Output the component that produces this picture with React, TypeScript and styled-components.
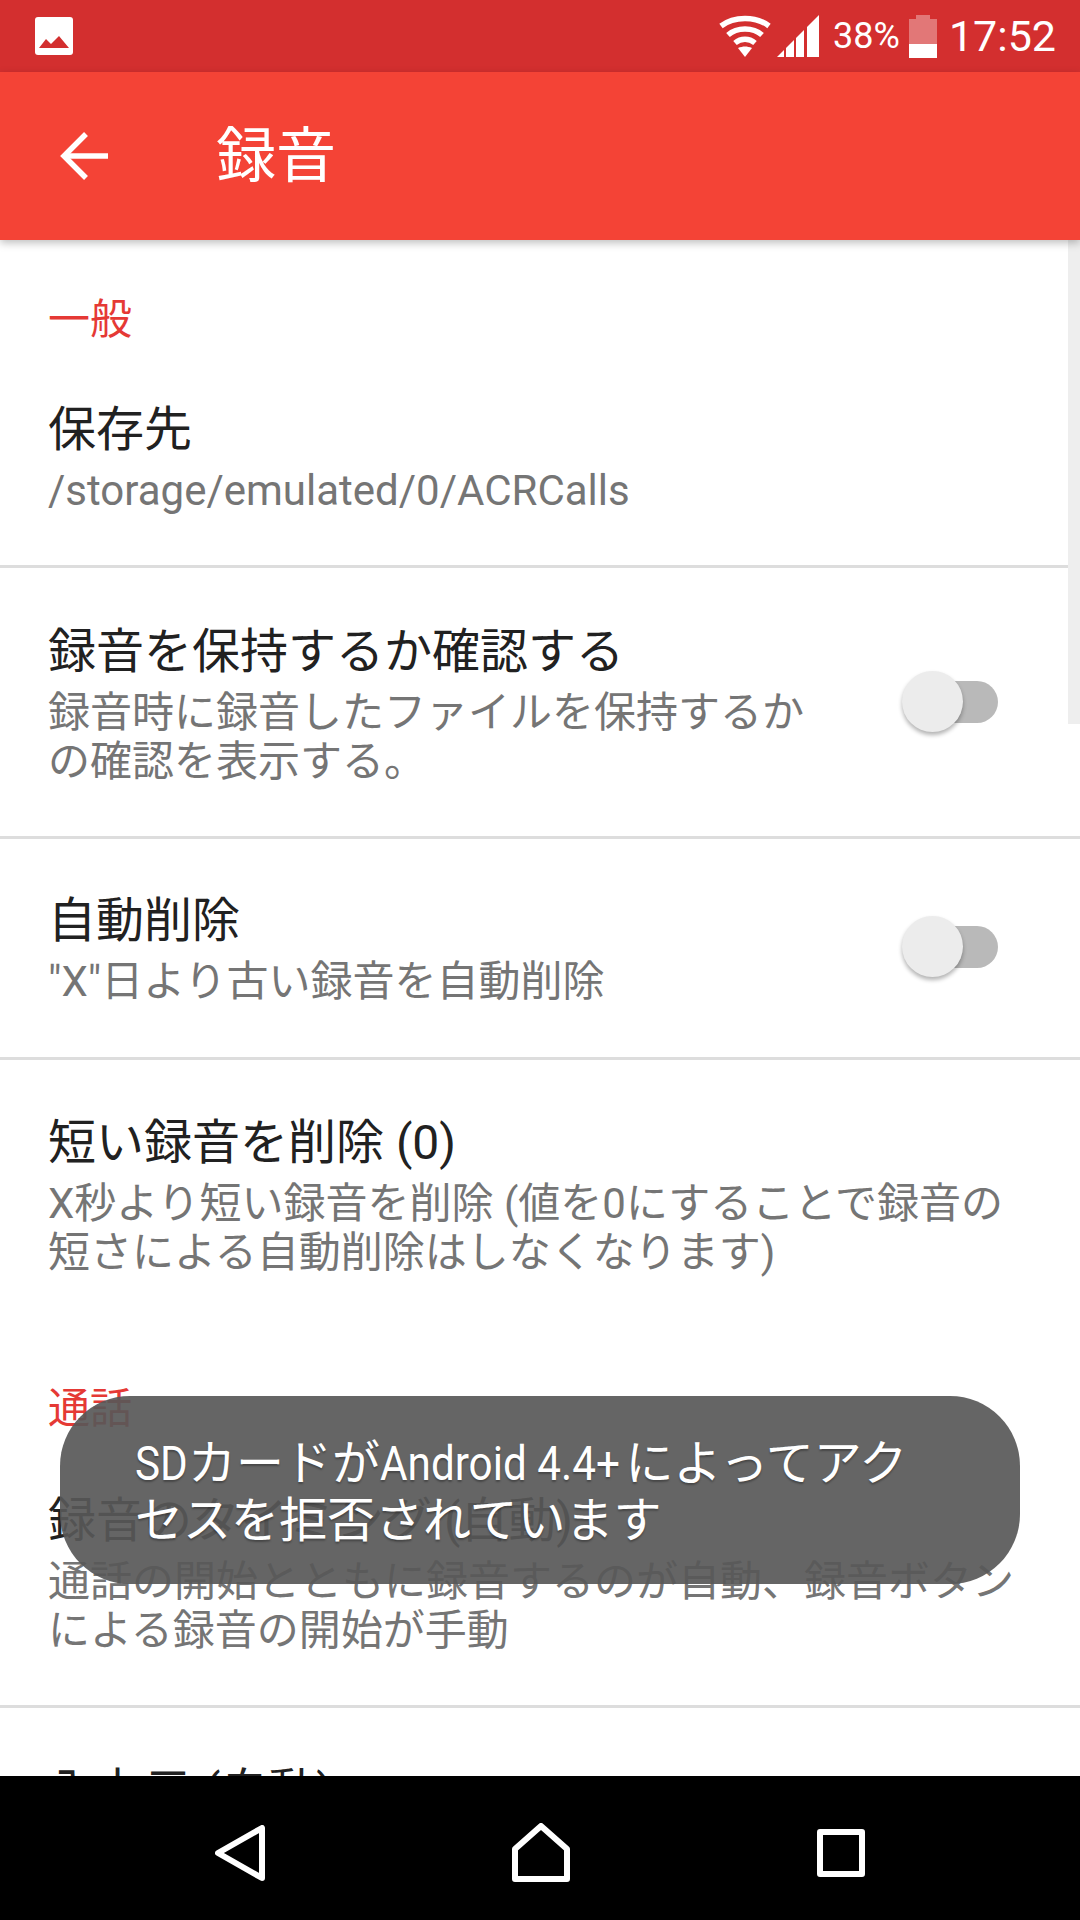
import React from 'react';
import styled, {createGlobalStyle} from "styled-components";

const GlobalStyle = createGlobalStyle`
    html, body {
        margin: 0;
        padding: 0;
        background: #fff;
    }
`;

const Screen = styled.div`
    position: relative;
    width: 1080px;
    height: 1920px;
    display: flex;
    flex-direction: column;
    overflow: hidden;
    background: #fff;
    font-family: Roboto, "Noto Sans CJK JP", sans-serif;
`;

const StatusBar = styled.div`
    height: 72px;
    flex-shrink: 0;
    display: flex;
    align-items: center;
    padding: 0 24px 0 35px;
    box-sizing: border-box;
    background: #d32f2f;
    color: #fff;
`;

const StatusRight = styled.div`
    margin-left: auto;
    display: flex;
    align-items: center;
`;

const BatteryText = styled.span`
    font-size: 36px;
    margin: 0 9px 0 14px;
`;

const Clock = styled.span`
    font-size: 43px;
    margin-left: 12px;
`;

const AppBar = styled.div`
    position: relative;
    z-index: 1;
    height: 168px;
    flex-shrink: 0;
    display: flex;
    align-items: center;
    padding-left: 60px;
    background: #f44336;
    box-shadow: 0 3px 8px rgba(0, 0, 0, 0.25);
`;

const AppTitle = styled.h1`
    margin: 2px 0 0 108px;
    color: #fff;
    font-size: 60px;
    font-weight: 400;
    line-height: 1;
`;

const Content = styled.div`
    position: relative;
    flex: 1;
    overflow: hidden;
`;

const ScrollThumb = styled.div`
    position: absolute;
    top: 0;
    right: 0;
    width: 12px;
    height: 484px;
    background: #eee;
`;

const SectionLabel = styled.div<{$top: number}>`
    padding: ${p => p.$top}px 48px 0;
    color: #e53935;
    font-size: 42px;
    line-height: 50px;
`;

const Row = styled.div<{$top: number; $bottom: number; $divider?: boolean}>`
    display: flex;
    align-items: center;
    padding: ${p => p.$top}px 48px ${p => p.$bottom}px 48px;
    border-bottom: ${p => (p.$divider ? "3px solid #ddd" : "none")};
`;

const RowText = styled.div`
    flex: 1;
    min-width: 0;
`;

const Title = styled.div`
    color: #212121;
    font-size: 48px;
    line-height: 60px;
    margin-bottom: 6px;
`;

const Summary = styled.div<{$narrow?: boolean}>`
    max-width: ${p => (p.$narrow ? "780px" : "none")};
    color: #757575;
    font-size: 42px;
    line-height: 49px;
`;

const SwitchBox = styled.div`
    position: relative;
    flex-shrink: 0;
    width: 96px;
    height: 62px;
    margin: 0 34px 4px 0;
`;

const SwitchTrack = styled.div`
    position: absolute;
    top: 10px;
    right: 0;
    width: 90px;
    height: 42px;
    border-radius: 21px;
    background: #b9b9b9;
`;

const SwitchThumb = styled.div`
    position: absolute;
    top: 0;
    left: 0;
    width: 61px;
    height: 61px;
    border-radius: 50%;
    background: #ececec;
    box-shadow: 0 3px 4px rgba(0, 0, 0, 0.3);
`;

const Toast = styled.div`
    position: absolute;
    left: 60px;
    right: 60px;
    bottom: 336px;
    padding: 39px 75px 35px;
    border-radius: 70px;
    background: rgba(88, 88, 88, 0.92);
    color: #fff;
    font-size: 48px;
    line-height: 57px;
    text-shadow: 0 2px 2px rgba(0, 0, 0, 0.3);
`;

// the toast's latin text is a condensed face, none is installed so squeeze Roboto
const NarrowLatin = styled.span<{$trim: number}>`
    display: inline-block;
    white-space: nowrap;
    transform: scaleX(0.88);
    transform-origin: left center;
    margin-right: ${p => -p.$trim}px;
`;

const NavBar = styled.div`
    height: 144px;
    flex-shrink: 0;
    box-sizing: border-box;
    padding-top: 9px;
    display: flex;
    align-items: center;
    justify-content: center;
    gap: 247px;
    background: #000;
`;

const ImageIcon = () => (
    <svg width="38" height="38" viewBox="0 0 38 38">
        <rect width="38" height="38" rx="3" fill="#fff"/>
        <path d="M4 31 L11 22 L16 27 L24 19 L34 31 Z" fill="#d32f2f"/>
    </svg>
);

const WifiIcon = () => (
    <svg width="52" height="42" viewBox="0 0 52 42" fill="none" stroke="#fff" strokeWidth="5.5">
        <path d="M2 11 C15 1 37 1 50 11"/>
        <path d="M9 20 C18 12 34 12 43 20"/>
        <path d="M16 28 C22 23 30 23 36 28"/>
        <path d="M19 33 L26 42 L33 33 C28 31 24 31 19 33 Z" fill="#fff" stroke="none"/>
    </svg>
);

const SignalIcon = () => (
    <svg width="42" height="42" viewBox="0 0 42 42" fill="#fff" style={{marginLeft: 6}}>
        <polygon points="0,42 7,35 7,42"/>
        <polygon points="9,33 17,25 17,42 9,42"/>
        <polygon points="19,23 27,15 27,42 19,42"/>
        <polygon points="30,12 42,0 42,42 30,42"/>
    </svg>
);

const BatteryIcon = () => (
    <svg width="28" height="43" viewBox="0 0 28 43" fill="#fff">
        <path d="M7 0 H21 V4 H28 V29 H0 V4 H7 Z" opacity="0.35"/>
        <rect y="29" width="28" height="14"/>
    </svg>
);

const BackArrow = () => (
    <svg width="48" height="48" viewBox="0 0 48 48" fill="none" stroke="#fff" strokeWidth="5.5">
        <path d="M48 24 H4"/>
        <path d="M26 2 L4 24 L26 46"/>
    </svg>
);

const NavBack = () => (
    <svg width="50" height="56" viewBox="0 0 50 56" fill="none" stroke="#fff" strokeWidth="6" strokeLinejoin="round">
        <path d="M47 3 V53 L3 28 Z"/>
    </svg>
);

const NavHome = () => (
    <svg width="58" height="59" viewBox="0 0 58 59" fill="none" stroke="#fff" strokeWidth="6" strokeLinejoin="round">
        <path d="M29 3 L55 26 V56 H3 V26 Z"/>
    </svg>
);

const NavRecents = () => (
    <svg width="48" height="48" viewBox="0 0 48 48" fill="none" stroke="#fff" strokeWidth="6" strokeLinejoin="round">
        <rect x="3" y="3" width="42" height="42"/>
    </svg>
);

const Switch = () => (
    <SwitchBox>
        <SwitchTrack/>
        <SwitchThumb/>
    </SwitchBox>
);

const App = () => {
    return (
        <Screen>
            <GlobalStyle/>
            <StatusBar>
                <ImageIcon/>
                <StatusRight>
                    <WifiIcon/>
                    <SignalIcon/>
                    <BatteryText>38%</BatteryText>
                    <BatteryIcon/>
                    <Clock>17:52</Clock>
                </StatusRight>
            </StatusBar>
            <AppBar>
                <BackArrow/>
                <AppTitle>録音</AppTitle>
            </AppBar>
            <Content>
                <ScrollThumb/>
                <SectionLabel $top={55}>一般</SectionLabel>
                <Row $top={55} $bottom={50} $divider>
                    <RowText>
                        <Title>保存先</Title>
                        <Summary>/storage/emulated/0/ACRCalls</Summary>
                    </RowText>
                </Row>
                <Row $top={54} $bottom={50} $divider>
                    <RowText>
                        <Title>録音を保持するか確認する</Title>
                        <Summary $narrow>録音時に録音したファイルを保持するかの確認を表示する。</Summary>
                    </RowText>
                    <Switch/>
                </Row>
                <Row $top={52} $bottom={51} $divider>
                    <RowText>
                        <Title>自動削除</Title>
                        <Summary $narrow>"X"日より古い録音を自動削除</Summary>
                    </RowText>
                    <Switch/>
                </Row>
                <Row $top={53} $bottom={0}>
                    <RowText>
                        <Title>短い録音を削除 (0)</Title>
                        <Summary>X秒より短い録音を削除 (値を0にすることで録音の短さによる自動削除はしなくなります)</Summary>
                    </RowText>
                </Row>
                <SectionLabel $top={107}>通話</SectionLabel>
                <Row $top={57} $bottom={50} $divider>
                    <RowText>
                        <Title>録音のタイミング (自動)</Title>
                        <Summary>通話の開始とともに録音するのが自動、録音ボタンによる録音の開始が手動</Summary>
                    </RowText>
                </Row>
                <Row $top={54} $bottom={50}>
                    <RowText>
                        <Title>入力元 (自動)</Title>
                    </RowText>
                </Row>
            </Content>
            <NavBar>
                <NavBack/>
                <NavHome/>
                <NavRecents/>
            </NavBar>
            <Toast>
                <NarrowLatin $trim={7}>SD</NarrowLatin>カードが<NarrowLatin $trim={27}>Android 4.4+</NarrowLatin>によってアクセスを拒否されています
            </Toast>
        </Screen>
    );
};

export default App;
